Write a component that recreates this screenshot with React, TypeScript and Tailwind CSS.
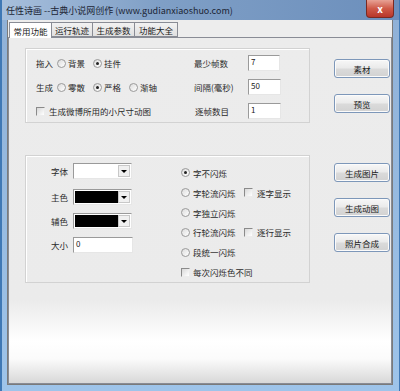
import React from 'react';

const font = { fontFamily: '"Noto Sans CJK SC", "Liberation Sans", sans-serif' };

const Radio: React.FC<{ checked?: boolean }> = ({ checked }) => (
  <span className="w-[9px] h-[9px] rounded-full border border-[#9a9a9a] bg-[linear-gradient(135deg,#dcdcdc,#ffffff)] flex items-center justify-center shrink-0">
    {checked && <span className="w-[3px] h-[3px] rounded-full bg-[#222]" />}
  </span>
);

const Check: React.FC = () => (
  <span className="w-[9px] h-[9px] border-t border-l border-[#8a8a8a] border-r border-b border-r-[#ececec] border-b-[#ececec] bg-[linear-gradient(135deg,#d8d8d8,#ffffff)] shrink-0" />
);

const Option: React.FC<{ label: string; checked?: boolean }> = ({ label, checked }) => (
  <div className="w-[36px] flex items-center gap-[2px]">
    <Radio checked={checked} />
    <span>{label}</span>
  </div>
);

const TextBox: React.FC<{ value: string; w: string }> = ({ value, w }) => (
  <div
    className={`${w} h-[16px] bg-white border-t border-l border-[#9a9a9a] border-r border-b border-r-[#e6e6e6] border-b-[#e6e6e6] text-[8px] leading-[12px] pl-[2px] text-[#222]`}
  >
    {value}
  </div>
);

const Combo: React.FC<{ color?: string }> = ({ color }) => (
  <div className="w-[59px] h-[16px] bg-white border-t border-l border-[#9a9a9a] border-r border-b border-r-[#e6e6e6] border-b-[#e6e6e6] flex items-stretch p-[1px]">
    <div className={`flex-1 ${color === 'black' ? 'bg-black' : 'bg-white'}`} />
    <div className="w-[12px] bg-[#f0f0f0] border border-[#c8c8c8] flex items-center justify-center">
      <span className="w-0 h-0 border-l-[3px] border-r-[3px] border-t-[3px] border-l-transparent border-r-transparent border-t-black" />
    </div>
  </div>
);

const Btn: React.FC<{ label: string }> = ({ label }) => (
  <div className="w-[56px] h-[19px] rounded-[3px] border border-[#7d97b9] bg-[linear-gradient(to_bottom,#f7f7f7,#ebebeb_45%,#dadada_55%,#d2d2d2)] flex items-center justify-center text-[#222] shadow-[inset_0_0_0_1px_#fbfbfb]">
    {label}
  </div>
);

const App: React.FC = () => {
  return (
    <div
      className="w-[400px] h-[391px] flex flex-col bg-[linear-gradient(to_bottom,#8fb0d6,#9ec4ea)] border-l-2 border-r border-[#3f78b5] text-[8.5px] leading-[12px] text-[#2a2a2a]"
      style={font}
    >
      {/* title bar */}
      <div className="h-[20px] flex items-start justify-between bg-[linear-gradient(to_right,#a7bfdc,#7f9fc6_40%,#6c8fbc)]">
        <span className="ml-[4px] mt-[5px] text-[9px] leading-[12px] text-[#1c2535]">
          任性诗画 --古典小说网创作 (www.gudianxiaoshuo.com)
        </span>
        <div className="mr-[5px] w-[28px] h-[18px] rounded-b-[4px] border border-t-0 border-[#7a2a22] bg-[linear-gradient(to_bottom,#e7a295,#cf5a48_50%,#b8362a)] flex items-center justify-center text-white text-[10px] font-bold leading-none">
          x
        </div>
      </div>

      {/* client */}
      <div className="flex-1 flex pl-[5px] pr-[6px] pb-[6px]">
        <div className="flex-1 flex flex-col bg-[#ededed] border-l border-b border-r border-[#7a7a7a]">
          {/* tabs */}
          <div className="h-[17px] flex items-end pl-[1px] text-[#1a1a1a]">
            <div className="h-[16px] w-[43px] -mb-[1px] bg-white border border-b-0 border-[#898c95] flex items-center justify-center z-10">
              常用功能
            </div>
            <div className="h-[15px] w-[41px] bg-[linear-gradient(to_bottom,#f2f2f2,#e0e0e0)] border border-l-0 border-[#898c95] flex items-center justify-center">
              运行轨迹
            </div>
            <div className="h-[15px] w-[42px] bg-[linear-gradient(to_bottom,#f2f2f2,#e0e0e0)] border border-l-0 border-[#898c95] flex items-center justify-center">
              生成参数
            </div>
            <div className="h-[15px] w-[43px] bg-[linear-gradient(to_bottom,#f2f2f2,#e0e0e0)] border border-l-0 border-[#898c95] flex items-center justify-center">
              功能大全
            </div>
          </div>

          {/* panel */}
          <div className="flex-1 border border-[#898c95] bg-[linear-gradient(to_bottom,#ececec,#ebebeb_76%,#f8f8f8_84%,#ffffff_88%,#fbfbfb_93%,#d8d8d8)] pl-[16px] pt-[10px]">
            {/* row 1 */}
            <div className="flex">
              <div className="w-[285px] h-[75px] border border-[#d2d2d2] shadow-[inset_1px_1px_0_#fff] pl-[10px] pt-[6px] flex flex-col gap-[8px]">
                <div className="h-[16px] flex items-center">
                  <div className="w-[158px] flex items-center">
                    <span className="w-[21px]">拖入</span>
                    <Option label="背景" />
                    <Option label="挂件" checked />
                  </div>
                  <span className="w-[54px]">最少帧数</span>
                  <TextBox value="7" w="w-[32px]" />
                </div>
                <div className="h-[16px] flex items-center">
                  <div className="w-[158px] flex items-center">
                    <span className="w-[21px]">生成</span>
                    <Option label="零散" />
                    <Option label="严格" checked />
                    <Option label="渐轴" />
                  </div>
                  <span className="w-[54px]">间隔(毫秒)</span>
                  <TextBox value="50" w="w-[33px]" />
                </div>
                <div className="h-[16px] flex items-center">
                  <div className="w-[159px] flex items-center gap-[4px]">
                    <Check />
                    <span>生成微博所用的小尺寸动图</span>
                  </div>
                  <span className="w-[53px]">逐帧数目</span>
                  <TextBox value="1" w="w-[33px]" />
                </div>
              </div>
              <div className="ml-[24px] mt-[11px] flex flex-col gap-[16px]">
                <Btn label="素材" />
                <Btn label="预览" />
              </div>
            </div>

            {/* row 2 */}
            <div className="flex mt-[32px]">
              <div className="w-[285px] h-[128px] border border-[#d2d2d2] shadow-[inset_1px_1px_0_#fff] pl-[25px] pt-[7px] flex">
                <div className="w-[130px] flex flex-col">
                  <div className="h-[16px] flex items-center">
                    <span className="w-[22px]">字体</span>
                    <Combo />
                  </div>
                  <div className="h-[16px] mt-[10px] flex items-center">
                    <span className="w-[22px]">主色</span>
                    <Combo color="black" />
                  </div>
                  <div className="h-[16px] mt-[8px] flex items-center">
                    <span className="w-[22px]">辅色</span>
                    <Combo color="black" />
                  </div>
                  <div className="h-[16px] mt-[8px] flex items-center">
                    <span className="w-[22px]">大小</span>
                    <TextBox value="0" w="w-[60px]" />
                  </div>
                </div>
                <div className="flex flex-col">
                  <div className="h-[20px] flex items-center">
                    <div className="w-[63px] flex items-center gap-[3px]">
                      <Radio checked />
                      <span>字不闪烁</span>
                    </div>
                  </div>
                  <div className="h-[20px] flex items-center">
                    <div className="w-[63px] flex items-center gap-[3px]">
                      <Radio />
                      <span>字轮流闪烁</span>
                    </div>
                    <Check />
                    <span className="ml-[4px]">逐字显示</span>
                  </div>
                  <div className="h-[20px] flex items-center">
                    <div className="w-[63px] flex items-center gap-[3px]">
                      <Radio />
                      <span>字独立闪烁</span>
                    </div>
                  </div>
                  <div className="h-[20px] flex items-center">
                    <div className="w-[63px] flex items-center gap-[3px]">
                      <Radio />
                      <span>行轮流闪烁</span>
                    </div>
                    <Check />
                    <span className="ml-[4px]">逐行显示</span>
                  </div>
                  <div className="h-[20px] flex items-center">
                    <div className="w-[63px] flex items-center gap-[3px]">
                      <Radio />
                      <span>段统一闪烁</span>
                    </div>
                  </div>
                  <div className="h-[20px] flex items-center gap-[3px]">
                    <Check />
                    <span>每次闪烁色不同</span>
                  </div>
                </div>
              </div>
              <div className="ml-[24px] mt-[8px] flex flex-col gap-[16px]">
                <Btn label="生成图片" />
                <Btn label="生成动图" />
                <Btn label="照片合成" />
              </div>
            </div>
          </div>
        </div>
      </div>
    </div>
  );
};

export default App;
